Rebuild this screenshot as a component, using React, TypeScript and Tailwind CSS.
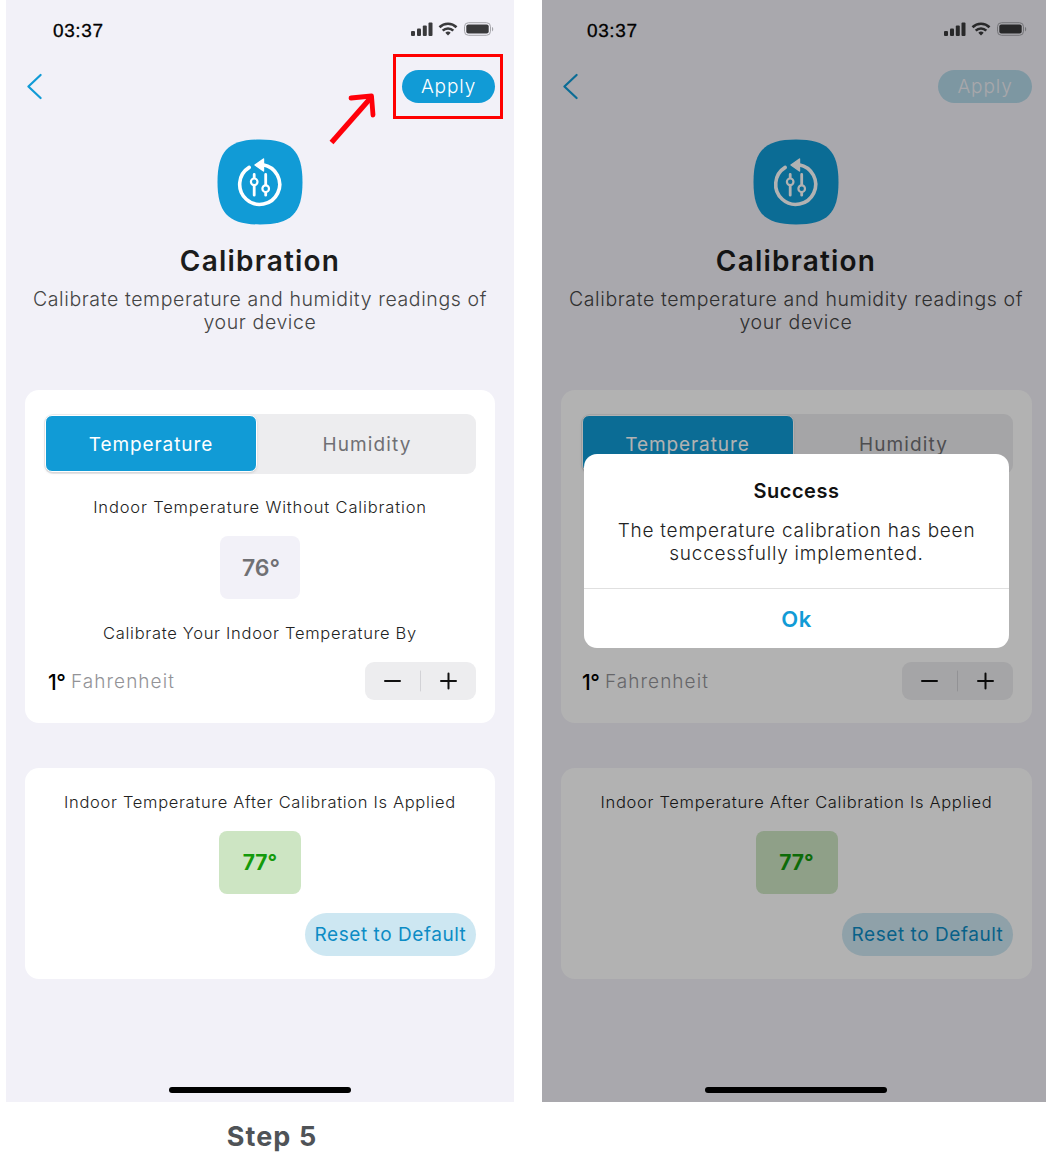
import type { ReactNode } from 'react';
import clsx from 'clsx';

function StatusIcons() {
  return (
    <svg width="84" height="18" viewBox="0 0 84 18" fill="none">
      {/* Signal */}
      <g fill="#3a3a3c">
        <rect x="1" y="10" width="4" height="5" rx="1" />
        <rect x="7" y="7.5" width="4" height="7.5" rx="1" />
        <rect x="12.8" y="4.5" width="4" height="10.5" rx="1" />
        <rect x="18.5" y="1.5" width="4" height="13.5" rx="1" />
      </g>
      {/* Wifi */}
      <g stroke="#3a3a3c" strokeWidth="2.6">
        <path d="M29.5 6.2a12.2 12.2 0 0 1 17 0" />
        <path d="M32.7 9.6a7.6 7.6 0 0 1 10.6 0" />
      </g>
      <path d="M35.3 11.8a4 4 0 0 1 5.4 0L38 14.6z" fill="#3a3a3c" />
      {/* Battery */}
      <rect x="54.5" y="1.7" width="26" height="12.6" rx="4" stroke="#a5a5aa" />
      <rect x="56.3" y="3.4" width="22.4" height="9.2" rx="2" fill="#3a3a3c" />
      <path d="M82 6v4.4c1.6-.6 1.6-3.8 0-4.4z" fill="#a5a5aa" />
    </svg>
  );
}

function CalibrationIcon() {
  return (
    <svg width="86" height="86" viewBox="0 0 86 86" fill="none">
      <path
        d="M43 .5C74 .5 85.5 11.5 85.5 43S74 85.5 43 85.5.5 74.500.5 43 12 .5 43 .5z"
        fill="#119bd6"
      />
      <g stroke="#fff" strokeLinecap="round">
        <path d="M32.2 28.4A20 20 0 1 0 46 25.700" strokeWidth="3.6" />
        <path d="M37.2 35.5v3M37.2 45v11.2M48.7 35.5v12M48.7 54v2.2" strokeWidth="2.8" />
        <circle cx="37.2" cy="42.8" r="3.3" strokeWidth="2.2" fill="#119bd6" />
        <circle cx="48.7" cy="49.7" r="3.3" strokeWidth="2.2" fill="#119bd6" />
      </g>
      <path d="M38 26 46.5 20v12z" fill="#fff" stroke="#fff" strokeWidth="1.4" strokeLinejoin="round" />
    </svg>
  );
}

function Card({ className, children }: { className?: string; children: ReactNode }) {
  return (
    <section className={clsx('ml-[19px] flex flex-col items-center rounded-[14px] bg-white', className)}>
      {children}
    </section>
  );
}

function Label({ className, children }: { className?: string; children: ReactNode }) {
  return (
    <p className={clsx('h-5 text-[16.5px] leading-5 font-[350] whitespace-nowrap text-[#222]', className)}>
      {children}
    </p>
  );
}

interface PhoneProps {
  applied?: boolean;
  children?: ReactNode;
}

function Phone({ applied = false, children }: PhoneProps) {
  const cardMargin = applied ? 'mr-[18px]' : 'mr-[19px]';
  // the dialog sits on top of these rows
  const covered = applied && 'invisible';

  return (
    <div className="relative flex h-[1102px] w-[508px] shrink-0 flex-col bg-[#f2f1f8]">
      {/* Status bar */}
      <div
        className={clsx(
          'flex h-[58px] items-center justify-between pt-[2px]',
          applied ? 'pr-[23px] pl-[45px]' : 'pr-5 pl-[47px]',
        )}
      >
        <span className="pt-[2px] font-['Liberation_Sans',sans-serif] text-[19px] tracking-[0.6px] text-black [-webkit-text-stroke:0.3px_#000]">
          03:37
        </span>
        <StatusIcons />
      </div>

      {/* Nav */}
      <div className={clsx('flex h-[57px] items-center justify-between pl-5', applied ? 'pr-[18px]' : 'pr-[19px]')}>
        <svg width="17" height="27" viewBox="0 0 17 27" fill="none" stroke="#119bd6" strokeWidth="2.2">
          <path d="M14.6 2 2.4 13.5l12.2 11.500" strokeLinecap="round" strokeLinejoin="round" />
        </svg>
        <button
          className={clsx(
            'h-[33px] rounded-full pt-px text-[19px] leading-[32px] font-[350] tracking-[0.9px]',
            applied ? 'w-[94px] bg-[#b4d8e8] text-[#f0f0f5]' : 'w-[93px] bg-[#119bd6] text-white',
          )}
        >
          Apply
        </button>
      </div>

      {/* Heading */}
      <div className="flex flex-col items-center pt-6">
        <CalibrationIcon />
        <h1 className="mt-[18px] h-9 text-[28px] leading-9 font-semibold tracking-[1.2px] text-[#1c1c1c]">
          Calibration
        </h1>
        <p className="mt-[9px] text-center text-[19.5px] leading-[23px] font-light tracking-[0.6px] whitespace-nowrap text-[#444]">
          Calibrate temperature and humidity readings of
          <br />
          your device
        </p>
      </div>

      <Card className={clsx('mt-[56px] h-[333px] pt-6', cardMargin)}>
        <div className="flex h-[60px] w-[432px] rounded-[9px] bg-[#ededef] p-[1px]">
          <div className="flex h-[57px] w-[212px] items-center justify-center rounded-[7px] border border-white bg-[#119bd6] pt-[3px] text-[19px] tracking-[0.9px] text-white shadow-sm">
            Temperature
          </div>
          <div className="flex flex-1 items-center justify-center pt-[2px] pl-[2px] text-[19px] tracking-[1.1px] text-[#707074]">
            Humidity
          </div>
        </div>
        <Label className={clsx('mt-[23px] tracking-[0.84px]', covered)}>Indoor Temperature Without Calibration</Label>
        <div
          className={clsx(
            'mt-[19px] flex h-[63px] w-20 items-center justify-center rounded-lg bg-[#f2f1f8] pt-[2px] pl-[2px] text-[23px] font-semibold text-[#707074]',
            covered,
          )}
        >
          76°
        </div>
        <Label className={clsx('mt-6 tracking-[0.7px]', covered)}>Calibrate Your Indoor Temperature By</Label>
        <div
          className={clsx('mt-[19px] flex h-[38px] w-full items-center pr-[19px]', applied ? 'pl-[21px]' : 'pl-[23px]')}
        >
          <span className="w-[23px] pt-[3px] text-[21px] font-medium tracking-[-0.5px] text-black">1°</span>
          <span className="pt-[2px] text-[19px] font-light tracking-[1.05px] text-[#939397]">Fahrenheit</span>
          <div className="ml-auto flex h-[38px] w-[111px] items-center rounded-[9px] bg-[#ededef]">
            <svg width="111" height="38" viewBox="0 0 111 38" stroke="#111" strokeWidth="2" strokeLinecap="round">
              <path d="M20 19h15M76 19h15M83.5 11.5v15" />
              <path d="M55.5 9v20" stroke="#d2d2d6" strokeWidth="1" />
            </svg>
          </div>
        </div>
      </Card>

      <Card className={clsx('mt-[45px] h-[211px] pt-6', cardMargin)}>
        <Label className="tracking-[0.68px]">Indoor Temperature After Calibration Is Applied</Label>
        <div className="mt-[19px] flex h-[63px] w-[82px] items-center justify-center rounded-lg bg-[#cde5c3] text-[21px] font-bold text-[#149a0c]">
          77°
        </div>
        <button className="mt-[19px] mr-[19px] h-[43px] w-[171px] self-end rounded-full bg-[#cde7f2] pt-[2px] text-[19px] font-[380] tracking-[0.55px] whitespace-nowrap text-[#0c8cc5]">
          Reset to Default
        </button>
      </Card>

      <div className="mt-auto mb-[9.5px] h-[6px] w-[182px] self-center rounded-full bg-black" />
      {children}
    </div>
  );
}

function ApplyHighlight() {
  return (
    <>
      <div className="absolute top-[54px] left-[387px] h-[65px] w-[110px] border-[3px] border-[#ff0000]" />
      <svg className="absolute top-[88px] left-[319px]" width="56" height="62" viewBox="0 0 56 62" fill="none">
        <path d="M6.5 54.5 46.5 9" stroke="#ff0009" strokeWidth="5.2" />
        <path
          d="M26 10 46.5 8l1.5 19"
          stroke="#ff0009"
          strokeWidth="4.8"
          strokeLinecap="round"
          strokeLinejoin="round"
        />
      </svg>
    </>
  );
}

function SuccessDialog() {
  return (
    <div className="absolute inset-0 bg-black/30">
      <div
        role="dialog"
        className="absolute top-[454px] left-[42px] flex h-[194px] w-[425px] flex-col items-center rounded-[13px] bg-white"
      >
        <h2 className="mt-[25px] h-6 text-[20px] leading-6 font-semibold tracking-[0.5px] text-[#111]">Success</h2>
        <p className="mt-4 h-[69px] text-center text-[19px] leading-[23px] font-[350] tracking-[0.76px] whitespace-nowrap text-[#222]">
          The temperature calibration has been
          <br />
          successfully implemented.
        </p>
        <button className="w-full flex-1 border-t border-[#e0e0e0] pt-px text-[22px] font-semibold tracking-[0.5px] text-[#119bd6]">
          Ok
        </button>
      </div>
    </div>
  );
}

export default function App() {
  return (
    <div className="h-[1165px] w-[1046px] overflow-hidden bg-white pl-[6px] font-['Inter',sans-serif]">
      <div className="flex gap-7">
        <Phone>
          <ApplyHighlight />
        </Phone>
        <Phone applied>
          <SuccessDialog />
        </Phone>
      </div>
      <p className="mt-[17px] w-[532px] text-center text-[27px] leading-9 font-bold tracking-[1.1px] text-[#4f5357]">
        Step 5
      </p>
    </div>
  );
}
